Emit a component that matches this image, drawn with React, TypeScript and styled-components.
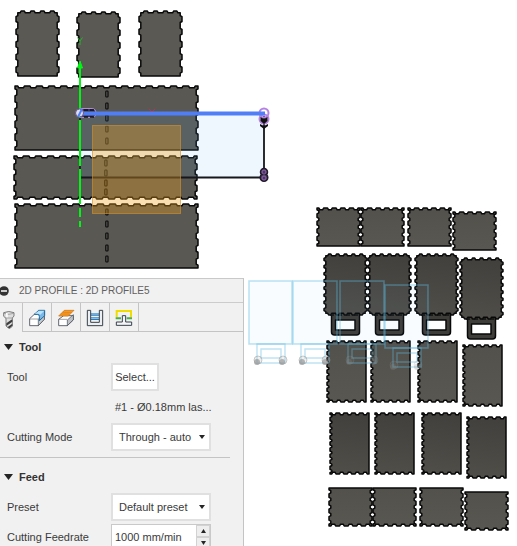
import React from "react";
import styled, { createGlobalStyle } from "styled-components";

const GlobalStyle = createGlobalStyle`
  * { box-sizing: border-box; }
  html, body { margin: 0; background: #fff; }
  body, button, input, select {
    font-family: "Liberation Sans", Arial, sans-serif;
    font-size: 11px;
    color: #3a3a3a;
  }
`;

/* ---------- layout ---------- */

const Workspace = styled.main`
  display: grid;
  grid-template-columns: minmax(244px, 47%) 1fr;
  grid-template-rows: minmax(0, 278fr) minmax(0, 268fr);
  height: 100vh;
  overflow: hidden;
`;

const Viewport = styled.svg`
  grid-area: 1 / 1 / 3 / 3;
  width: 100%;
  height: 100%;
  min-height: 0;
`;

const Panel = styled.form`
  grid-area: 2 / 1;
  z-index: 1;
  overflow: hidden;
  background: #f1f1f1;
  border-top: 1px solid #c9c9c9;
  border-right: 1px solid #c4c4c4;
`;

const PanelHeader = styled.header`
  display: flex;
  align-items: center;
  height: 24px;
  gap: 10px;
  border-bottom: 1px solid #cccccc;
`;

const CollapseButton = styled.button`
  display: flex;
  justify-content: flex-end;
  width: 9px;
  height: 12px;
  padding: 0;
  border: 0;
  background: none;
  overflow: hidden;

  > svg { flex-shrink: 0; }
`;

const Title = styled.h1`
  margin: 0;
  font-size: 10px;
  font-weight: 400;
  color: #606060;
  white-space: nowrap;
`;

const Tabs = styled.div`
  display: flex;
  height: 29px;
  border-bottom: 1px solid #c4c4c4;
`;

const Tab = styled.button<{ $active?: boolean }>`
  display: flex;
  align-items: center;
  justify-content: center;
  width: ${(p) => (p.$active ? "23px" : "29px")};
  height: ${(p) => (p.$active ? "29px" : "28px")};
  padding: ${(p) => (p.$active ? "4px 4px 0 0" : "2px 0 0")};
  border: 0;
  border-right: 1px solid #c4c4c4;
  background: ${(p) => (p.$active ? "#f1f1f1" : "none")};

  > svg { flex-shrink: 0; }
`;

const Section = styled.section`
  width: 230px;
  padding-bottom: 5px;
  margin-bottom: 4px;
  border-bottom: 1px solid #c4c4c4;
`;

const SectionTitle = styled.h2`
  display: flex;
  align-items: center;
  gap: 6px;
  height: 30px;
  margin: 0;
  padding-left: 4px;
  font-size: 11px;
  font-weight: 700;
  color: #333;
`;

const Row = styled.div`
  display: grid;
  grid-template-columns: 104px 100px;
  align-items: center;
  height: 30px;
  padding-left: 7px;
`;

const ToolInfo = styled.output`
  grid-column: 2;
  padding-left: 4px;
  white-space: nowrap;
`;

const PickButton = styled.button`
  justify-self: start;
  width: 48px;
  height: 28px;
  padding: 0;
  border: 2px solid #e0e0e0;
  background: #fff;
`;

const SelectBox = styled.div`
  display: grid;
  align-items: center;

  > * { grid-area: 1 / 1; }
  > svg { justify-self: end; margin-right: 6px; pointer-events: none; }
`;

const Select = styled.select`
  appearance: none;
  width: 100%;
  height: 28px;
  padding: 0 16px 0 6px;
  border: 2px solid #e0e0e0;
  border-radius: 0;
  background: #fff;
`;

const NumberBox = styled.div`
  display: grid;
  grid-template-columns: 1fr 14px;
  height: 27px;
  border: 1px solid #c9c9c9;
  background: #fff;
`;

const NumberInput = styled.input`
  min-width: 0;
  padding: 0 3px;
  border: 0;
  background: none;
`;

const Spinner = styled.div`
  display: grid;
  grid-template-rows: 1fr 1fr;
`;

const SpinButton = styled.button`
  display: flex;
  align-items: center;
  justify-content: center;
  padding: 0;
  border: 1px solid #d2d2d2;
  background: #eeeeee;
`;

/* ---------- laser-cut parts ---------- */

type Sides = [top: number, right: number, bottom: number, left: number];

/** Outline with fingers: `n` notches per side, or `n` raised teeth when `raised` is set. */
function outline(x: number, y: number, w: number, h: number, sides: Sides, raised = false, depth = 2) {
  const base = raised ? depth : 0;
  const left = x + base;
  const top = y + base;
  const right = x + w - base;
  const bottom = y + h - (sides[2] ? base : 0);
  const shift = raised ? -depth : depth;
  const corners = [[left, top], [right, top], [right, bottom], [left, bottom]];
  const dirs = [[1, 0], [0, 1], [-1, 0], [0, -1]];
  let d = `M${left} ${top}`;
  for (let s = 0; s < 4; s++) {
    const [cx, cy] = corners[s];
    const [dx, dy] = dirs[s];
    const [nx, ny] = [-dy, dx];
    const length = s % 2 ? bottom - top : right - left;
    const n = sides[s];
    const point = (along: number, off: number) =>
      ` L${(cx + dx * along + nx * off).toFixed(2)} ${(cy + dy * along + ny * off).toFixed(2)}`;
    const pitch = length / (n || 1);
    for (let i = 0; i < n; i++) {
      const a = (i + 0.23) * pitch;
      const b = (i + 0.77) * pitch;
      d += point(a, 0) + point(a + 1, shift) + point(b - 1, shift) + point(b, 0);
    }
    d += point(length, 0);
  }
  return d + "Z";
}

interface PartSpec {
  x: number; y: number; w: number; h: number;
  sides: Sides; fill: string; raised?: boolean; handle?: boolean;
}

const row = (
  spots: [number, number][], w: number, h: number, sides: Sides, fill: string,
  extra: Partial<PartSpec> = {},
): PartSpec[] => spots.map(([x, y]) => ({ x, y, w, h, sides, fill, ...extra }));

const parts: PartSpec[] = [
  ...row([[16, 11], [77, 12], [139, 11]], 43, 65, [4, 5, 0, 5], "#5b5953", { raised: true }),
  ...row([[15, 86], [15, 204]], 183, 64, [15, 5, 0, 5], "#5a5852"),
  ...row([[14, 156]], 183, 43, [15, 4, 15, 4], "#5a5852"),
  ...row([[317, 208], [361, 208], [408, 208], [453, 212]], 43, 38, [5, 5, 0, 5], "url(#light)"),
  ...row([[324, 254], [368, 254], [415, 254], [460, 258]], 43, 61, [5, 8, 5, 8], "url(#deep)", { raised: true, handle: true }),
  ...row([[327, 341], [371, 341], [418, 341], [463, 345]], 39, 61, [5, 0, 5, 10], "url(#light)"),
  ...row([[330, 413], [375, 413], [422, 413], [467, 417]], 39, 61, [5, 0, 5, 10], "url(#deep)"),
  ...row([[329, 488], [373, 488], [420, 488], [465, 492]], 43, 38, [0, 5, 5, 5], "url(#light)"),
];

const slots: [number, number[]][] = [
  [107, [94, 106, 118, 129, 141]],
  [106, [163, 173, 183, 192]],
  [107, [212, 224, 236, 248, 259]],
];

function Part({ x, y, w, h, sides, fill, raised, handle }: PartSpec) {
  return (
    <g stroke="#080808" strokeWidth="1.5" strokeLinejoin="round">
      {handle && (
        <path
          d={`M${x + 7.5} ${y + h - 3}v20q0 3 3 3h22q3 0 3 -3v-20z M${x + 11.5} ${y + h + 5}h19.500v10h-19.500z`}
          fill="#3f3d39" fillRule="evenodd"
        />
      )}
      <path d={outline(x, y, w, h, sides, raised, 1.8)} fill={fill} />
    </g>
  );
}

function Wheel({ cx, cy }: { cx: number; cy: number }) {
  return (
    <g>
      <circle cx={cx - 1} cy={cy + 2} r="3" fill="#888" opacity=".65" />
      <circle cx={cx} cy={cy} r="4" fill="#b5b5b5" fillOpacity=".2" stroke="#9a9a9a" strokeOpacity=".5" />
    </g>
  );
}

function GhostCarts() {
  return (
    <g>
      <g fill="#68baf0" fillOpacity=".04" stroke="#5db8e2" strokeOpacity=".4" strokeWidth="1.6">
        <rect x="249" y="281" width="43" height="63" />
        <rect x="293" y="281" width="44" height="63" />
        <rect x="340" y="281" width="44" height="63" />
        <rect x="385" y="285" width="43" height="63" />
      </g>
      <g fill="none" stroke="#5db8e2" strokeOpacity=".4" strokeWidth="1.4">
        {[[257, 344], [301, 344], [348, 344], [393, 348]].map(([x, y]) => (
          <path key={x} d={`M${x} ${y}h28v19h-28z M${x + 4} ${y + 5}h20v9h-20z`} />
        ))}
      </g>
      <Wheel cx={258} cy={360} /><Wheel cx={283} cy={360} />
      <Wheel cx={303} cy={360} /><Wheel cx={326} cy={360} />
      <g opacity=".4">
        <Wheel cx={350} cy={360} /><Wheel cx={374} cy={360} />
        <Wheel cx={394} cy={365} /><Wheel cx={418} cy={365} />
      </g>
    </g>
  );
}

function Canvas() {
  return (
    <Viewport viewBox="0 0 517 546" preserveAspectRatio="xMinYMin meet" aria-label="Model view">
      <defs>
        <linearGradient id="light" x2="0" y2="1">
          <stop stopColor="#53514c" /><stop offset="1" stopColor="#595751" />
        </linearGradient>
        <linearGradient id="deep" x1=".5" x2=".4" y2="1">
          <stop stopColor="#42403c" /><stop offset="1" stopColor="#504e49" />
        </linearGradient>
      </defs>
      {parts.map((p) => <Part key={`${p.x}-${p.y}`} {...p} />)}
      <g fill="#66645d" stroke="#080808" strokeWidth="1.2">
        {slots.map(([x, ys]) => ys.map((y) => (
          <rect key={`${x}-${y}`} x={x - 1.2} y={y - 3} width="2.2" height="6" rx=".8" />
        )))}
      </g>
      <g stroke="#111" strokeWidth="1.4" strokeDasharray="4 4">
        {[[330, 315], [374, 315], [421, 315], [466, 319]].map(([x, y]) => (
          <path key={x} d={`M${x} ${y}h30`} />
        ))}
      </g>
      <GhostCarts />

      <rect x="80" y="114" width="184" height="64" fill="#5fb4f7" fillOpacity=".1" />
      <path d="M80 177.500H264V116" fill="none" stroke="#15171c" strokeWidth="1.8" />
      <rect x="92.500" y="125.500" width="88" height="88" fill="#efa01c" fillOpacity=".34" stroke="#d0912f" strokeOpacity=".65" />
      <g stroke="#00f514" strokeWidth="2">
        <path d="M80 66V166M80 169V204M80 208V217M80 221V227" />
        <path d="M80 61L82.500 68H77.500Z" fill="#00f514" strokeWidth="1" />
        <path d="M77.500 37.500L80 41L82.500 37.500M80 41V45" fill="none" stroke="#20b52a" strokeWidth="1" />
      </g>
      <path d="M80 166V169M80 118V120" stroke="#222" strokeWidth="2" />
      <rect x="78" y="108.500" width="18" height="9" rx="4.500" fill="#3b3742" stroke="#b18bdd" strokeWidth="1.200" />
      <path d="M84 110H88M90 110H94M84 117H88M90 117H94" stroke="#111" strokeWidth="1.500" />
      <path d="M149 109L155 115M155 109L149 115" stroke="#c32e4a" />
      <g fill="none" stroke="#b583e2" strokeWidth="2">
        <circle cx="264" cy="113" r="4.500" />
        <circle cx="264" cy="119" r="4.500" />
      </g>
      <path d="M80 113.500H265" stroke="#4f7ef7" strokeWidth="4" />
      <circle cx="79.500" cy="113" r="4" fill="#dcdcf4" stroke="#68548a" />
      <path d="M78 117L82 109" stroke="#4f7ef7" strokeWidth="2" />
      <path d="M260.500 117L264 119L267.500 117V121L264 124L260.500 121ZM260 124L264 126L268 124V126L264 129L260 126Z" fill="#111" />
      <g fill="#493a58" stroke="#21182c" strokeWidth="1.500">
        <circle cx="264" cy="172" r="3.500" /><circle cx="264" cy="177.500" r="3.800" />
      </g>
      <g fill="none" stroke="#9061b5"><circle cx="264" cy="172" r="2" /><circle cx="264" cy="178" r="2" /></g>
    </Viewport>
  );
}

/* ---------- icons ---------- */

const Caret = ({ size = 6, up = false }: { size?: number; up?: boolean }) => (
  <svg width={size} height={size > 6 ? 6 : 4} viewBox="0 0 9 6" preserveAspectRatio="none" aria-hidden="true">
    <path d={up ? "M0 6H9L4.500 0Z" : "M0 0H9L4.500 6Z"} fill="#252525" />
  </svg>
);

const Icon = ({ children }: { children: React.ReactNode }) => (
  <svg width="18" height="18" viewBox="0 0 54 54" aria-hidden="true">{children}</svg>
);

const DrillIcon = () => (
  <Icon>
    <path d="M11 5Q26 -2 42 5V15L37 21V46L28 53L18 45V22L11 16Z" fill="#dedede" stroke="#666" strokeWidth="2.500" />
    <path d="M12 7Q27 13 41 7M17 21H37" fill="none" stroke="#888" strokeWidth="2" />
    <path d="M19 37L34 26H37V32L19 45ZM22 49L37 38V44L28 52Z" fill="#3e3e3e" />
    <path d="M18 6H23V19H19Z" fill="#fff" />
  </Icon>
);

const GeometryIcon = () => (
  <Icon>
    <path d="M5 29L20 15H40L49 8V31L31 50H5Z" fill="#fff" stroke="#444b57" strokeWidth="2.500" />
    <path d="M31 31L49 13V31L31 50Z" fill="#c8cace" stroke="#444b57" strokeWidth="2" />
    <path d="M5 30H31" stroke="#777" strokeWidth="2" />
    <path d="M19 16L32 4H50V20L34 35V22Q34 16 28 16Z" fill="#79b8e9" stroke="#1e6797" strokeWidth="3" />
    <path d="M20 14L33 5H49L37 17Q34 14 28 14Z" fill="#b9e2fb" />
  </Icon>
);

const HeightsIcon = () => (
  <Icon>
    <path d="M5 31L20 20H49V33L31 50H5Z" fill="#fff" stroke="#444b57" strokeWidth="2.500" />
    <path d="M31 33L49 17V32L31 50Z" fill="#bfc1c5" stroke="#444b57" strokeWidth="2" />
    <path d="M5 31H31" stroke="#777" strokeWidth="2" />
    <path d="M5 21L22 4H51L34 21Z" fill="#fa9d25" stroke="#c66d0d" strokeWidth="2" />
    <path d="M11 15H38M17 10H44" stroke="#d77a15" strokeWidth="2" />
  </Icon>
);

const PassesIcon = () => (
  <Icon>
    <path d="M14 16H40M14 29H40" stroke="#2e77b5" strokeWidth="8" />
    <path d="M14 15H40M14 28H40" stroke="#82c0ec" strokeWidth="4" />
    <path d="M4 4H14V40H40V4H50V50H4Z" fill="#eceef0" stroke="#37404e" strokeWidth="3" />
  </Icon>
);

const LinkingIcon = () => (
  <Icon>
    <path d="M5 25V6H48V25" fill="none" stroke="#f1dc00" strokeWidth="6" />
    <path d="M2 28H18M35 28H51" stroke="#48ad52" strokeWidth="6" />
    <path d="M22 20H32V39H50V49H4V39H22Z" fill="#f5f5f5" stroke="#37404e" strokeWidth="3" />
  </Icon>
);

const tabs = [
  { name: "Tool", icon: DrillIcon },
  { name: "Geometry", icon: GeometryIcon },
  { name: "Heights", icon: HeightsIcon },
  { name: "Passes", icon: PassesIcon },
  { name: "Linking", icon: LinkingIcon },
];

function Dropdown({ id, value }: { id: string; value: string }) {
  return (
    <SelectBox>
      <Select id={id} defaultValue={value}><option>{value}</option></Select>
      <Caret />
    </SelectBox>
  );
}

export default function App() {
  return (
    <>
      <GlobalStyle />
      <Workspace>
        <Canvas />
        <Panel>
          <PanelHeader>
            <CollapseButton type="button" aria-label="Collapse panel">
              <svg width="10" height="12" viewBox="0 0 10 12" aria-hidden="true">
                <circle cx="5" cy="6" r="4.800" fill="#333" />
                <path d="M2 6H8" stroke="#fff" strokeWidth="1.500" />
              </svg>
            </CollapseButton>
            <Title>2D PROFILE : 2D PROFILE5</Title>
          </PanelHeader>
          <Tabs role="tablist">
            {tabs.map(({ name, icon: TabIcon }, i) => (
              <Tab key={name} type="button" role="tab" aria-label={name} aria-selected={i === 0} $active={i === 0}>
                <TabIcon />
              </Tab>
            ))}
          </Tabs>
          <Section>
            <SectionTitle><Caret size={9} />Tool</SectionTitle>
            <Row>
              <label htmlFor="tool">Tool</label>
              <PickButton id="tool" type="button">Select...</PickButton>
            </Row>
            <Row><ToolInfo htmlFor="tool">#1 - Ø0.18mm las...</ToolInfo></Row>
            <Row>
              <label htmlFor="mode">Cutting Mode</label>
              <Dropdown id="mode" value="Through - auto" />
            </Row>
          </Section>
          <Section>
            <SectionTitle><Caret size={9} />Feed</SectionTitle>
            <Row>
              <label htmlFor="preset">Preset</label>
              <Dropdown id="preset" value="Default preset" />
            </Row>
            <Row>
              <label htmlFor="feedrate">Cutting Feedrate</label>
              <NumberBox>
                <NumberInput id="feedrate" defaultValue="1000 mm/min" />
                <Spinner>
                  <SpinButton type="button" aria-label="Increase feedrate"><Caret size={5} up /></SpinButton>
                  <SpinButton type="button" aria-label="Decrease feedrate"><Caret size={5} /></SpinButton>
                </Spinner>
              </NumberBox>
            </Row>
          </Section>
        </Panel>
      </Workspace>
    </>
  );
}
